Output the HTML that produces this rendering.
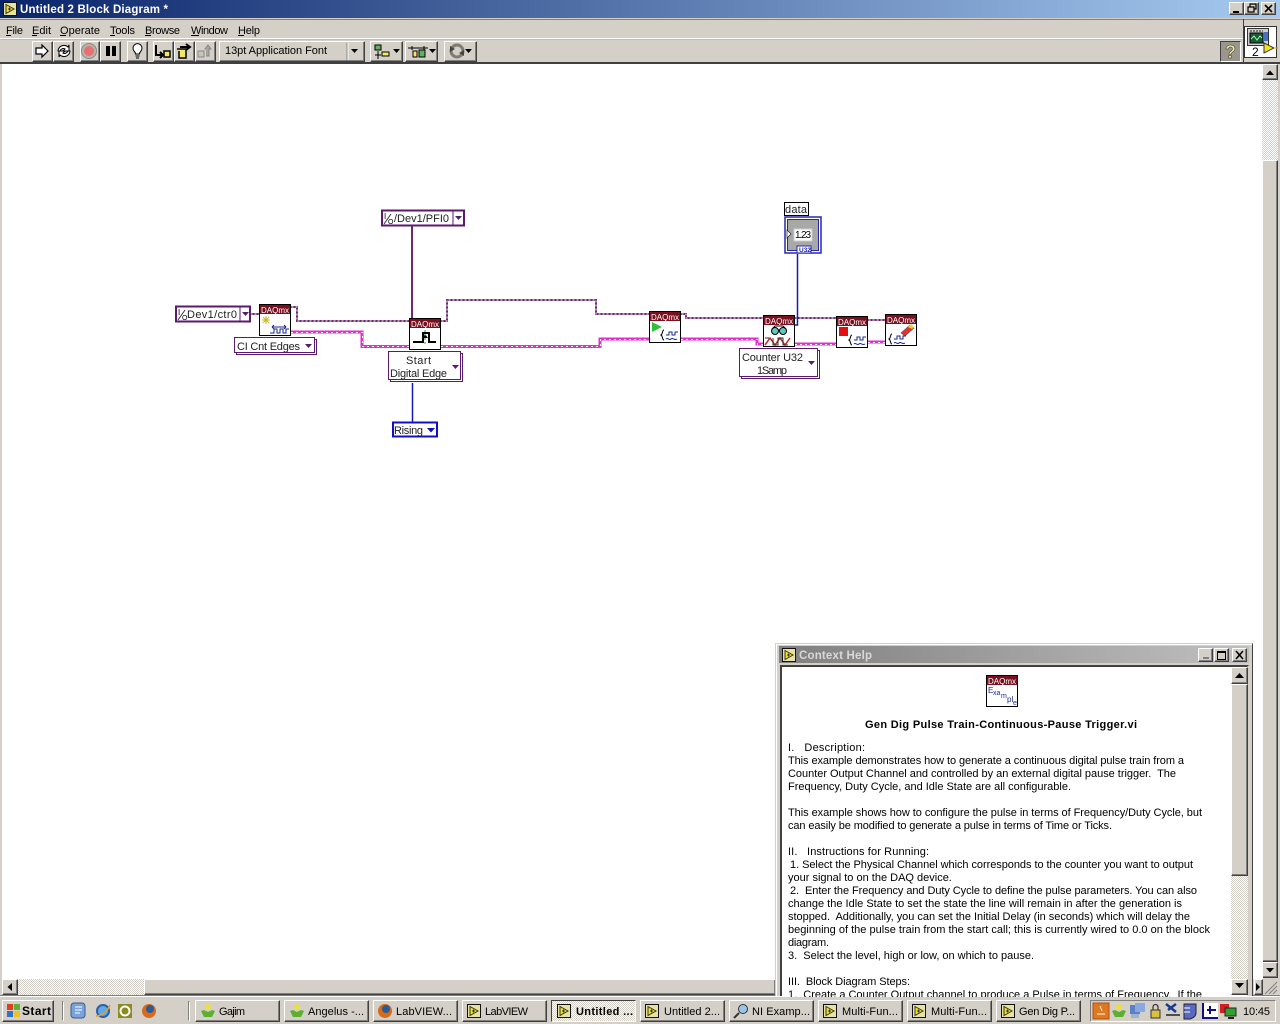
<!DOCTYPE html>
<html><head><meta charset="utf-8"><title>Untitled 2 Block Diagram</title>
<style>
html,body{margin:0;padding:0;width:1280px;height:1024px;overflow:hidden;background:#d4d0c8}
div{position:absolute;box-sizing:border-box}
.b{background:#d4d0c8;border:1px solid;border-color:#fff #404040 #404040 #fff;box-shadow:inset -1px -1px #808080}
.s{background:#d4d0c8;border:1px solid;border-color:#808080 #fff #fff #808080}
.chk{background-color:#fff;background-image:conic-gradient(#d4d0c8 25%,#fff 0 50%,#d4d0c8 0 75%,#fff 0);background-size:2px 2px}
svg{position:absolute;left:0;top:0}
text{font-family:"Liberation Sans",sans-serif;font-size:11px;fill:#000;white-space:pre}
.w{fill:#fff;font-weight:bold}
.dq{fill:#fff;font-size:8px}
.d{font-size:11px;fill:#222}
</style></head><body>
<!-- title bar -->
<div style="left:0;top:0;width:1280px;height:18px;background:linear-gradient(90deg,#0a246a,#a6caf0)"></div>
<div class="b" style="left:1229px;top:2px;width:15px;height:13px"></div>
<div class="b" style="left:1244px;top:2px;width:15px;height:13px"></div>
<div class="b" style="left:1261px;top:2px;width:15px;height:13px"></div>
<!-- menu rule / toolbar rule -->
<div style="left:0;top:19px;width:1280px;height:1px;background:#808080"></div>
<div style="left:0;top:38px;width:1243px;height:1px;background:#fff"></div>
<div style="left:0;top:39px;width:1243px;height:1px;background:#c0bcb4"></div>
<!-- diagram -->
<div style="left:2px;top:64px;width:1261px;height:915px;background:#fff"></div>
<div style="left:0;top:62px;width:1280px;height:2px;background:#404040"></div>
<!-- toolbar -->
<div class="b" style="left:32px;top:41px;width:21px;height:21px"></div>
<div class="b" style="left:53px;top:41px;width:21px;height:21px"></div>
<div class="b" style="left:80px;top:41px;width:20px;height:21px"></div>
<div class="b" style="left:100px;top:41px;width:21px;height:21px"></div>
<div class="b" style="left:127px;top:41px;width:21px;height:21px"></div>
<div class="b" style="left:153px;top:41px;width:21px;height:21px"></div>
<div class="b" style="left:174px;top:41px;width:21px;height:21px"></div>
<div class="b" style="left:195px;top:41px;width:21px;height:21px"></div>
<div class="b" style="left:219px;top:41px;width:146px;height:21px"></div>
<div class="b" style="left:370px;top:41px;width:33px;height:21px"></div>
<div class="b" style="left:405px;top:41px;width:33px;height:21px"></div>
<div class="b" style="left:444px;top:41px;width:33px;height:21px"></div>
<div style="left:1220px;top:41px;width:21px;height:21px;background:#9a968e;border:1px solid;border-color:#404040 #fff #fff #404040"></div>
<div style="left:1243px;top:19px;width:1px;height:45px;background:#404040"></div>
<div style="left:1244px;top:26px;width:33px;height:32px;background:#fff;border:1px solid #333"></div>
<!-- main scrollbars -->
<div style="left:1263px;top:64px;width:15px;height:915px;background:#d4d0c8"></div>
<div class="b" style="left:1262px;top:64px;width:16px;height:16px"></div>
<div class="chk" style="left:1262px;top:80px;width:16px;height:80px"></div>
<div class="b" style="left:1262px;top:160px;width:16px;height:802px"></div>
<div class="b" style="left:1262px;top:962px;width:16px;height:16px"></div>
<div class="b" style="left:2px;top:979px;width:16px;height:16px"></div>
<div class="chk" style="left:18px;top:979px;width:126px;height:16px"></div>
<div class="b" style="left:144px;top:979px;width:632px;height:16px"></div>
<div class="b" style="left:1254px;top:979px;width:9px;height:16px"></div>
<div style="left:1253px;top:643px;width:10px;height:336px;background:#fff"></div>
<div style="left:0;top:995px;width:1280px;height:1px;background:#808080"></div>
<!-- help window -->
<div style="left:775px;top:643px;width:478px;height:354px;background:#d4d0c8;border:1px solid;border-color:#d4d0c8 #404040 #404040 #d4d0c8;box-shadow:inset 1px 1px #fff"></div>
<div style="left:779px;top:646px;width:470px;height:17px;background:linear-gradient(90deg,#808080,#c0c0c0)"></div>
<div class="b" style="left:1198px;top:648px;width:15px;height:14px"></div>
<div class="b" style="left:1214px;top:648px;width:15px;height:14px"></div>
<div class="b" style="left:1232px;top:648px;width:15px;height:14px"></div>
<div style="left:780px;top:665px;width:469px;height:333px;background:#fff;border:2px solid;border-color:#404040 #d4d0c8 #d4d0c8 #404040;border-bottom:0"></div>
<div class="b" style="left:1231px;top:667px;width:17px;height:17px"></div>
<div class="b" style="left:1231px;top:684px;width:17px;height:192px"></div>
<div class="chk" style="left:1231px;top:876px;width:17px;height:103px"></div>
<div class="b" style="left:1231px;top:979px;width:17px;height:16px"></div>
<!-- taskbar -->
<div style="left:0;top:996px;width:1280px;height:28px;background:#d4d0c8;border-top:1px solid #fff"></div>
<div class="b" style="left:2px;top:1000px;width:52px;height:22px"></div>
<div class="s" style="left:62px;top:1001px;width:2px;height:20px"></div>
<div class="s" style="left:188px;top:1001px;width:2px;height:20px"></div>
<div class="b" style="left:195px;top:1000px;width:85px;height:22px"></div>
<div class="b" style="left:284px;top:1000px;width:85px;height:22px"></div>
<div class="b" style="left:373px;top:1000px;width:85px;height:22px"></div>
<div class="b" style="left:462px;top:1000px;width:85px;height:22px"></div>
<div class="chk" style="left:551px;top:1000px;width:85px;height:22px;border:1px solid;border-color:#404040 #fff #fff #404040"></div>
<div class="b" style="left:640px;top:1000px;width:85px;height:22px"></div>
<div class="b" style="left:729px;top:1000px;width:85px;height:22px"></div>
<div class="b" style="left:818px;top:1000px;width:85px;height:22px"></div>
<div class="b" style="left:907px;top:1000px;width:85px;height:22px"></div>
<div class="b" style="left:996px;top:1000px;width:85px;height:22px"></div>
<div class="s" style="left:1090px;top:1000px;width:186px;height:22px"></div>

<svg width="1280" height="1024" viewBox="0 0 1280 1024" xmlns="http://www.w3.org/2000/svg">
<defs>
<g id="lv"><rect width="14" height="14" fill="#111"/><rect x="1" y="1" width="12" height="12" fill="#e8e4a0"/><path d="M3 2.500L11 7L3 11.500Z" fill="#f2e018" stroke="#333"/><path d="M5 7h3M6.500 5.500v3" stroke="#333"/></g>
<g id="pg"><circle cx="8" cy="4" r="3" fill="#e8e040"/><path d="M1 8l3-1 4 2 4-2 3 1-3 6H4Z" fill="#5cb030"/></g>
<g id="ff"><circle cx="8" cy="8" r="7" fill="#d86a18"/><circle cx="9" cy="6" r="4" fill="#2a5a9a"/></g>
<clipPath id="cp"><rect x="782" y="670" width="448" height="327"/></clipPath>
</defs>

<!-- title -->
<use href="#lv" x="3" y="2"/>
<text x="20" y="13" class="w" textLength="148" style="font-size:11.5px">Untitled 2 Block Diagram *</text>
<!-- window controls -->
<path d="M1233 12h6" stroke="#000" stroke-width="2"/>
<path d="M1248 7h6v5h-6zM1250 7V4h6v5h-2" fill="none" stroke="#000" stroke-width="1.200"/>
<path d="M1265 5l7 7M1272 5l-7 7" stroke="#000" stroke-width="1.600"/>
<!-- menu -->
<text x="6" y="34" textLength="17">File</text><path d="M6 35.500h5" stroke="#000"/>
<text x="32" y="34" textLength="19">Edit</text><path d="M32 35.500h5" stroke="#000"/>
<text x="60" y="34" textLength="40">Operate</text><path d="M60 35.500h6" stroke="#000"/>
<text x="110" y="34" textLength="25">Tools</text><path d="M110 35.500h5" stroke="#000"/>
<text x="145" y="34" textLength="35">Browse</text><path d="M145 35.500h6" stroke="#000"/>
<text x="191" y="34" textLength="37">Window</text><path d="M191 35.500h8" stroke="#000"/>
<text x="238" y="34" textLength="22">Help</text><path d="M238 35.500h6" stroke="#000"/>

<!-- toolbar icons -->
<path d="M36 48h6v-3l6 6-6 6v-3h-6z" fill="#fff" stroke="#000" stroke-width="1.200"/>
<path d="M58 51a6 6 0 0 1 10-4l1-2v6h-6l2-2a3.500 3.500 0 0 0-5 2zM70 51a6 6 0 0 1-10 4l-1 2v-6h6l-2 2a3.500 3.500 0 0 0 5-2z" fill="#fff" stroke="#000"/>
<circle cx="89" cy="51" r="7.500" fill="#b8b4ac" stroke="#888"/><circle cx="89" cy="51" r="5" fill="#e87070"/>
<rect x="106" y="46" width="4" height="10"/><rect x="112" y="46" width="4" height="10"/>
<path d="M134 51a4.500 4.500 0 1 1 7 0c-1 1-1.500 1.500-1.500 3h-4c0-1.500-.5-2-1.500-3z" fill="#fff" stroke="#000"/><path d="M135.500 56h4M136 58h3" stroke="#000"/>
<path d="M156 45v10h6M160 52l3 3-3 3" fill="none" stroke="#000" stroke-width="2"/><rect x="164" y="51" width="6" height="6" fill="#f0e868" stroke="#000" stroke-width="1.500"/>
<path d="M177 49h9v9h-7v-7" fill="#f0e868" stroke="#000" stroke-width="1.500"/><path d="M180 47h9M186 44l4 3-4 3" fill="none" stroke="#000" stroke-width="2"/>
<rect x="198" y="51" width="6" height="6" fill="#c8c4bc" stroke="#888"/><path d="M206 56h3v-7h2l-3-4-3 4h1" fill="#a8a49c" stroke="#888"/>
<text x="225" y="54" textLength="102">13pt Application Font</text>
<path d="M347 43v17" stroke="#888"/><path d="M348 43v17" stroke="#fff"/><path d="M351 49h7l-3.500 4z"/>
<!-- align -->
<rect x="375" y="45" width="6" height="5" fill="#60b060" stroke="#000"/><path d="M378 51v8M375 55h6" stroke="#000"/><rect x="382" y="52" width="7" height="4" fill="#f0e868" stroke="#000"/><path d="M393 49h7l-3.500 4z"/>
<path d="M408 48h20M412 46v4M424 46v4" stroke="#000"/><rect x="413" y="51" width="4" height="6" fill="#f0e868" stroke="#000"/><rect x="419" y="50" width="6" height="7" fill="#60b060" stroke="#000"/><path d="M429 49h7l-3.500 4z"/>
<circle cx="457" cy="51" r="6" fill="none" stroke="#807c74" stroke-width="3"/><path d="M450 46l5 3-5 3zM464 56l-5-3 5-3z" fill="#444"/><path d="M465 49h7l-3.500 4z"/>
<!-- help btn -->
<text x="1225" y="58" style="font-size:18px;font-weight:bold;fill:#f0e8a0;stroke:#333;stroke-width:.5">?</text>
<!-- connector pane -->
<rect x="1247.500" y="28.500" width="21" height="17" fill="#d0d0d0" stroke="#333"/><rect x="1250" y="33" width="13" height="10" fill="#1a5a3a" stroke="#000"/><path d="M1251 39l3-3 3 4 3-4 2 2" fill="none" stroke="#9f9"/><rect x="1264" y="32" width="4" height="9" fill="#4a70c0"/><path d="M1250 31h13" stroke="#222" stroke-dasharray="2 1"/>
<path d="M1264 43l10 5-10 5z" fill="#f2e018" stroke="#333"/><path d="M1274 48h4" stroke="#c8a020"/>
<text x="1252" y="56" style="font-size:12px">2</text>

<!-- main scroll arrows -->
<path d="M1266 75h8l-4-4.500z"/>
<path d="M1266 968h8l-4 4.500z"/>
<path d="M12 983v8l-4.500-4z"/>
<path d="M1256 983v8l4-4z"/>
<path d="M1265 994l12-12M1269 994l8-8M1273 994l4-4" stroke="#808080" fill="none"/>

<!-- wires -->
<g fill="none">
<g stroke="#6e2a70" stroke-width="2">
<path d="M250 314h9"/>
<path d="M291 307h6v14h113"/>
<path d="M441 321h6v-21h149v14h53"/>
<path d="M681 314h5v4h77"/>
<path d="M795 318h42"/>
<path d="M868 320h17"/>
<path d="M412 226v93"/>
</g>
<g stroke="#fff" stroke-width="1" stroke-dasharray="2 2" transform="translate(.5 .5)">
<path d="M250 313.500h9"/>
<path d="M291 306.500h5.500v14h113"/>
<path d="M441 320.500h5.500v-21h149v14h53"/>
<path d="M681 313.500h4.500v4h77"/>
<path d="M795 317.500h42"/>
<path d="M868 319.500h17"/>
</g>
<g stroke="#e030d0" stroke-width="3">
<path d="M291 332h71v14.500h48"/>
<path d="M441 346.500h159v-7.500h49"/>
<path d="M681 339h76v5h6"/>
<path d="M795 344h42"/>
<path d="M868 342h17"/>
</g>
<g stroke="#fff" stroke-width="1" stroke-dasharray="2 3">
<path d="M291 332.500h71.500v14h48"/>
<path d="M441 346.500h159.500v-7h48"/>
<path d="M681 339.500h76.500v5h6"/>
<path d="M795 344.500h42"/>
<path d="M868 342.500h17"/>
</g>
<path d="M412.500 383v39" stroke="#1818b8" stroke-width="1.500"/>
<path d="M797.500 254v71h-3" stroke="#1818b8" stroke-width="1.500"/>
</g>

<!-- Dev1/ctr0 -->
<rect x="176" y="306.500" width="74" height="15" fill="#fff" stroke="#5a1a6e" stroke-width="2"/>
<path d="M240 307v14" stroke="#5a1a6e"/><path d="M242 312h7l-3.500 4z" fill="#5a1a6e"/>
<text x="178" y="315" style="font-size:8px">I</text><path d="M178 320l7-10" stroke="#333"/><text x="182" y="320" style="font-size:7px">O</text>
<text x="187" y="318" class="d" textLength="50">Dev1/ctr0</text>
<!-- PFI0 -->
<rect x="382" y="210.500" width="82" height="15" fill="#fff" stroke="#5a1a6e" stroke-width="2"/>
<path d="M453 211v14" stroke="#5a1a6e"/><path d="M455 216h7l-3.500 4z" fill="#5a1a6e"/>
<text x="384" y="219" style="font-size:8px">I</text><path d="M384 224l7-10" stroke="#333"/><text x="388" y="224" style="font-size:7px">O</text>
<text x="394" y="222" class="d" textLength="55">/Dev1/PFI0</text>
<!-- CI Cnt Edges -->
<rect x="236.500" y="339.500" width="80" height="15" fill="#fff" stroke="#5a1a6e"/>
<rect x="234.500" y="337.500" width="80" height="15" fill="#fff" stroke="#5a1a6e"/>
<text x="237" y="350" class="d" textLength="63">CI Cnt Edges</text>
<path d="M305 344h7l-3.500 4z" fill="#5a1a6e"/>
<!-- Start Digital Edge -->
<rect x="390.500" y="353.500" width="72" height="28" fill="#fff" stroke="#5a1a6e"/>
<rect x="388.500" y="351.500" width="72" height="28" fill="#fff" stroke="#5a1a6e"/>
<text x="406" y="364" class="d" textLength="25">Start</text>
<text x="390" y="377" class="d" textLength="57">Digital Edge</text>
<path d="M452 365h7l-3.500 4z" fill="#5a1a6e"/>
<!-- Rising -->
<rect x="393" y="422.500" width="44" height="14" fill="#fff" stroke="#1010c0" stroke-width="2"/>
<text x="394" y="434" class="d" textLength="29">Rising</text>
<path d="M427 428h8l-4 4.500z" fill="#1010c0"/>
<!-- Counter U32 -->
<rect x="741.500" y="350.500" width="78" height="28" fill="#fff" stroke="#5a1a6e"/>
<rect x="739.500" y="348.500" width="78" height="28" fill="#fff" stroke="#5a1a6e"/>
<text x="742" y="361" class="d" textLength="61">Counter U32</text>
<text x="757" y="374" class="d" textLength="30">1Samp</text>
<path d="M808 361h7l-3.500 4z" fill="#5a1a6e"/>
<!-- data -->
<rect x="784.500" y="202.500" width="24" height="13" fill="#fff" stroke="#000"/>
<text x="785" y="213" class="d" textLength="22">data</text>
<rect x="785" y="217" width="36" height="36" fill="#fff" stroke="#2828a8" stroke-width="1.500"/>
<rect x="787.500" y="219.500" width="31" height="31" fill="#a8a8a8" stroke="#2828a8"/>
<path d="M787 230l4 4-4 4z" fill="#fff" stroke="#222" stroke-width=".7"/>
<rect x="794" y="229" width="18" height="12" fill="#fff" stroke="#ccc"/>
<text x="795" y="238" style="font-size:10px" textLength="16">1.23</text>
<rect x="797" y="246" width="14" height="7" fill="#fff" stroke="#2828a8"/>
<text x="799" y="252" style="font-size:6.500px;font-weight:bold;fill:#2828a8">U32</text>

<!-- Node 1 -->
<rect x="259.500" y="304.500" width="31" height="31" fill="#fff" stroke="#000"/><rect x="260" y="305" width="30" height="9" fill="#7a0f1e"/><text x="261" y="313" class="dq" textLength="28">DAQmx</text>
<path d="M263 317l6 6M269 317l-6 6M266 316v8M262 320h8" stroke="#c8b820"/>
<path d="M272 327h14M272 327l2-2M272 327l2 2M286 327l-2-2M286 327l-2 2" stroke="#1a2a90" fill="none"/>
<path d="M270 333h4v-4h3v4h3v-4h3v4h3v-4h3" fill="none" stroke="#1a2a90"/>
<!-- Node 2 -->
<g transform="translate(-1 -1)">
<rect x="410.500" y="319.500" width="31" height="31" fill="#fff" stroke="#000"/><rect x="411" y="320" width="30" height="9" fill="#7a0f1e"/><text x="412" y="328" class="dq" textLength="28">DAQmx</text>
<path d="M414 343h10v-9h6v9h7" fill="none" stroke="#000" stroke-width="2"/><path d="M423 339l3-4 3 4z" fill="#000"/><path d="M426 331v14" stroke="#30a040" stroke-dasharray="2 2"/>
</g>
<!-- Node 3 -->
<rect x="649.500" y="311.500" width="31" height="31" fill="#fff" stroke="#000"/><rect x="650" y="312" width="30" height="9" fill="#7a0f1e"/><text x="651" y="320" class="dq" textLength="28">DAQmx</text>
<path d="M652 322l10 5-10 5z" fill="#30c040"/>
<path d="M664 330c-2 0-1 4-3 5c2 1 1 5 3 5" fill="none" stroke="#000"/><path d="M666 335h3v-3h3v3h3v-3h3M666 339c2-2 3 2 5 0s3 2 6 0" fill="none" stroke="#1a2a90"/>
<!-- Node 4 -->
<rect x="763.500" y="315.500" width="31" height="31" fill="#fff" stroke="#000"/><rect x="764" y="316" width="30" height="9" fill="#7a0f1e"/><text x="765" y="324" class="dq" textLength="28">DAQmx</text>
<circle cx="775" cy="331" r="3.500" fill="#60c8c0" stroke="#000"/><circle cx="783" cy="331" r="3.500" fill="#60c8c0" stroke="#000"/><path d="M778 330h2M772 329l3-3h8l3 3" fill="none" stroke="#000"/>
<path d="M765 345l5-7 5 7 5-7 5 7 5-7" fill="none" stroke="#c02020" stroke-width="1.500"/><path d="M765 338h4M773 338v7h5v-7h5v7h5" fill="none" stroke="#333"/>
<!-- Node 5 -->
<g transform="translate(0 -1)">
<rect x="836.500" y="317.500" width="31" height="31" fill="#fff" stroke="#000"/><rect x="837" y="318" width="30" height="9" fill="#7a0f1e"/><text x="838" y="326" class="dq" textLength="28">DAQmx</text>
<rect x="839" y="328" width="9" height="9" fill="#e01010"/>
<path d="M852 336c-2 0-1 4-3 5c2 1 1 5 3 5" fill="none" stroke="#000"/><path d="M854 341h3v-3h3v3h3v-3h3M854 345c2-2 3 2 5 0s3 2 6 0" fill="none" stroke="#1a2a90"/>
</g>
<!-- Node 6 -->
<rect x="885.500" y="314.500" width="31" height="31" fill="#fff" stroke="#000"/><rect x="886" y="315" width="30" height="9" fill="#7a0f1e"/><text x="887" y="323" class="dq" textLength="28">DAQmx</text>
<path d="M901 333l9-8 4 3-9 8z" fill="#e83030" stroke="#555" stroke-width=".6"/><path d="M908 327l3-3 3 3-2 2z" fill="#f0d040"/>
<path d="M892 334c-2 0-1 4-3 5c2 1 1 5 3 5" fill="none" stroke="#000"/><path d="M894 339h3v-3h3v3h3v-3h3M894 343c2-2 3 2 5 0s3 2 6 0" fill="none" stroke="#1a2a90"/>

<!-- help window -->
<use href="#lv" x="782" y="648"/>
<text x="799" y="659" class="w" style="fill:#d8d8d8;font-size:11.5px" textLength="73">Context Help</text>
<path d="M1203 658h6" stroke="#808080" stroke-width="2"/>
<path d="M1217.500 651.500h8v8h-8z" fill="none" stroke="#000"/><path d="M1217 652h9" stroke="#000" stroke-width="2"/>
<path d="M1236 651l7 8M1243 651l-7 8" stroke="#000" stroke-width="1.600"/>
<path d="M1235 678h9l-4.500-5z"/>
<path d="M1235 983h9l-4.500 5z"/>
<rect x="986.500" y="675.500" width="31" height="31" fill="#fff" stroke="#000"/><rect x="987" y="676" width="30" height="9" fill="#7a0f1e"/><text x="988" y="684" class="dq" textLength="28">DAQmx</text>
<text x="988" y="693" style="font-size:8px;fill:#1a2a90">E</text><text x="993" y="695" style="font-size:7px;fill:#1a2a90">xa</text><text x="1001" y="698" style="font-size:7px;fill:#1a2a90">m</text><text x="1007" y="702" style="font-size:8px;fill:#1a2a90">pl</text><text x="1013" y="705" style="font-size:7px;fill:#1a2a90">e</text>
<text x="865" y="728" textLength="272" style="font-weight:bold">Gen Dig Pulse Train-Continuous-Pause Trigger.vi</text>
<g clip-path="url(#cp)">
<text x="788" y="751" textLength="77">I.   Description:</text>
<text x="788" y="764" textLength="396">This example demonstrates how to generate a continuous digital pulse train from a</text>
<text x="788" y="777" textLength="388">Counter Output Channel and controlled by an external digital pause trigger.  The</text>
<text x="788" y="790" textLength="283">Frequency, Duty Cycle, and Idle State are all configurable.</text>
<text x="788" y="816" textLength="414">This example shows how to configure the pulse in terms of Frequency/Duty Cycle, but</text>
<text x="788" y="829" textLength="324">can easily be modified to generate a pulse in terms of Time or Ticks.</text>
<text x="788" y="855" textLength="141">II.   Instructions for Running:</text>
<text x="790" y="868" textLength="403">1. Select the Physical Channel which corresponds to the counter you want to output</text>
<text x="788" y="881">your signal to on the DAQ device.</text>
<text x="790" y="894" textLength="407">2.  Enter the Frequency and Duty Cycle to define the pulse parameters. You can also</text>
<text x="788" y="907" textLength="394">change the Idle State to set the state the line will remain in after the generation is</text>
<text x="788" y="920" textLength="402">stopped.  Additionally, you can set the Initial Delay (in seconds) which will delay the</text>
<text x="788" y="933" textLength="422">beginning of the pulse train from the start call; this is currently wired to 0.0 on the block</text>
<text x="788" y="946" textLength="41">diagram.</text>
<text x="788" y="959" textLength="246">3.  Select the level, high or low, on which to pause.</text>
<text x="788" y="985" textLength="122">III.  Block Diagram Steps:</text>
<text x="788" y="998" textLength="414">1.  Create a Counter Output channel to produce a Pulse in terms of Frequency.  If the</text>
</g>

<!-- taskbar -->
<rect x="7" y="1004" width="6" height="6" fill="#e04020"/><rect x="14" y="1004" width="6" height="6" fill="#60b030"/><rect x="7" y="1011" width="6" height="6" fill="#3070d0"/><rect x="14" y="1011" width="6" height="6" fill="#f0c020"/>
<text x="22" y="1015" style="font-weight:bold;font-size:12px" textLength="29">Start</text>
<rect x="71" y="1003" width="14" height="15" rx="3" fill="#7aa4d8" stroke="#3a5a90"/><path d="M75 1007h7M75 1010h7M75 1013h5" stroke="#fff"/>
<circle cx="103" cy="1011" r="6" fill="#60a8e8" stroke="#2a60a8" stroke-width="2"/><path d="M96 1016c5 0 12-5 14-11" stroke="#e8a020" fill="none" stroke-width="1.500"/>
<rect x="118" y="1004" width="14" height="14" fill="#8a8a20"/><circle cx="125" cy="1011" r="4.500" fill="none" stroke="#fff" stroke-width="2"/>
<use href="#ff" x="141" y="1003"/>
<use href="#pg" x="200" y="1003"/><text x="219" y="1015" textLength="26">Gajim</text>
<use href="#pg" x="289" y="1003"/><text x="308" y="1015" textLength="56">Angelus -...</text>
<use href="#ff" x="377" y="1003"/><text x="396" y="1015" textLength="56">LabVIEW...</text>
<use href="#lv" x="467" y="1004"/><text x="485" y="1015" textLength="43">LabVIEW</text>
<use href="#lv" x="557" y="1004"/><text x="576" y="1015" style="font-weight:bold" textLength="57">Untitled ...</text>
<use href="#lv" x="645" y="1004"/><text x="664" y="1015" textLength="56">Untitled 2...</text>
<circle cx="743" cy="1009" r="4.500" fill="#9ac4ec" stroke="#333"/><path d="M739 1013l-5 5" stroke="#333" stroke-width="2"/><text x="752" y="1015" textLength="58">NI Examp...</text>
<use href="#lv" x="823" y="1004"/><text x="842" y="1015" textLength="56">Multi-Fun...</text>
<use href="#lv" x="912" y="1004"/><text x="931" y="1015" textLength="56">Multi-Fun...</text>
<use href="#lv" x="1001" y="1004"/><text x="1019" y="1015" textLength="56">Gen Dig P...</text>
<!-- tray -->
<rect x="1093" y="1003" width="16" height="16" fill="#e07820" stroke="#b05010"/><path d="M1097 1014h8M1100 1006l2 5" stroke="#fff"/>
<use href="#pg" x="1111" y="1003"/>
<rect x="1130" y="1005" width="10" height="9" fill="#5a80c8"/><rect x="1135" y="1003" width="10" height="9" fill="#8aa8e0"/><rect x="1131" y="1014" width="8" height="4" fill="#a0b0d0"/>
<rect x="1151" y="1010" width="9" height="8" fill="#d8c040" stroke="#333"/><path d="M1153 1010v-3a2.500 2.500 0 0 1 5 0v3" fill="none" stroke="#333" stroke-width="1.200"/>
<path d="M1166 1004l10 8M1176 1004l-8 6" stroke="#1a3a90" stroke-width="2.500"/><path d="M1166 1015h14" stroke="#222" stroke-width="1.500"/>
<path d="M1184 1004h12v9c0 3-3 5-6 6h-6z" fill="#5a6ac0" stroke="#223"/><path d="M1184 1008h6M1184 1012h6" stroke="#fff"/>
<rect x="1202" y="1003" width="16" height="16" fill="#fff"/><path d="M1203 1003v15h15M1210 1006v8M1207 1010h9" stroke="#101080" stroke-width="2" fill="none"/>
<rect x="1220" y="1004" width="9" height="9" fill="#d02020"/><rect x="1225" y="1008" width="11" height="8" fill="#30a030" stroke="#222"/><path d="M1228 1018h6" stroke="#222" stroke-width="2"/>
<text x="1243" y="1015" textLength="27">10:45</text>
</svg>
</body></html>
